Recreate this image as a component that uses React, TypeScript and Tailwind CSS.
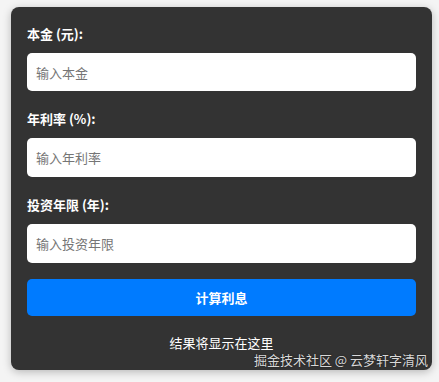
import React from "react";

export default function App() {
  const font = { fontFamily: '"Noto Sans CJK SC", "Noto Sans", sans-serif' };
  return (
    <div className="w-[439px] h-[382px] bg-[#f4f4f4] pt-[7px] pl-[11px]" style={font}>
      <div className="relative w-[421px] h-[363px] bg-[#333333] rounded-[8px] shadow-[0_2px_8px_rgba(0,0,0,0.25)] px-[16px] pt-[17px] flex flex-col">
        <label className="block text-white text-[13px] font-bold leading-[20px] mb-[9px]">本金 (元):</label>
        <input
          className="w-full h-[38px] bg-white rounded-[5px] px-[9px] text-[13px] text-[#333] placeholder:text-[#757575] outline-none"
          placeholder="输入本金"
          style={font}
        />
        <label className="block text-white text-[13px] font-bold leading-[20px] mt-[18px] mb-[9px]">年利率 (%):</label>
        <input
          className="w-full h-[39px] bg-white rounded-[5px] px-[9px] text-[13px] text-[#333] placeholder:text-[#757575] outline-none"
          placeholder="输入年利率"
          style={font}
        />
        <label className="block text-white text-[13px] font-bold leading-[20px] mt-[18px] mb-[9px]">投资年限 (年):</label>
        <input
          className="w-full h-[39px] bg-white rounded-[5px] px-[9px] text-[13px] text-[#333] placeholder:text-[#757575] outline-none"
          placeholder="输入投资年限"
          style={font}
        />
        <button
          className="mt-[16px] w-full h-[37px] bg-[#007bff] rounded-[5px] text-white text-[13px] font-bold"
          style={font}
        >
          计算利息
        </button>
        <div className="mt-[17px] text-center text-white text-[13px] leading-[20px]">结果将显示在这里</div>
        <div className="absolute right-[4px] bottom-[1px] text-[13px] leading-[18px] text-[#d8d8d8] [text-shadow:0_0_2px_rgba(0,0,0,0.6)] whitespace-nowrap">
          掘金技术社区 @ 云梦轩字清风
        </div>
      </div>
    </div>
  );
}
